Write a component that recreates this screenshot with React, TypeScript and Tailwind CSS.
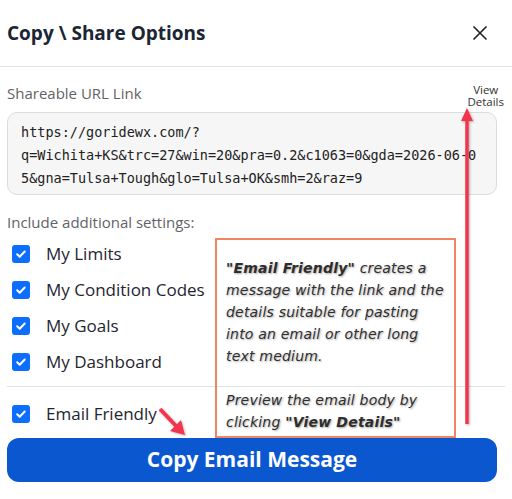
import React from "react";

const settings = ["My Limits", "My Condition Codes", "My Goals", "My Dashboard"];

function Check() {
  return (
    <span className="flex h-[18px] w-[18px] shrink-0 items-center justify-center rounded-[3px] bg-[#0d6efd]">
      <svg width="12" height="12" viewBox="0 0 12 12" fill="none">
        <path d="M2.2 6.2l2.5 2.5 5-5.2" stroke="white" strokeWidth="2" strokeLinecap="round" strokeLinejoin="round" />
      </svg>
    </span>
  );
}

function Row({ label }: { label: string }) {
  return (
    <label className="flex h-[36px] items-center gap-[16px] pl-[5px]">
      <Check />
      <span className="text-[17px] text-[#1e2530]">{label}</span>
    </label>
  );
}

export default function App() {
  return (
    <div className="relative h-[499px] w-[512px] overflow-hidden bg-white font-['Open_Sans',sans-serif]">
      <div className="flex h-[67px] items-center justify-between border-b border-[#e3e3e3] px-[7px]">
        <h1 className="text-[19px] font-bold text-[#1b2533]">Copy \ Share Options</h1>
        <svg width="16" height="16" viewBox="0 0 16 16" className="mr-[17px]">
          <path d="M1.5 1.5l13 13M14.5 1.5l-13 13" stroke="#222" strokeWidth="1.6" />
        </svg>
      </div>

      <div className="px-[7px]">
        <div className="flex items-end justify-between pt-[15px]">
          <span className="text-[15px] text-[#5f6368]">Shareable URL Link</span>
          <span className="-mb-[3px] -mt-[4px] mr-[1px] text-center text-[11.5px] leading-[12px] text-[#333]">
            View
            <br />
            Details
          </span>
        </div>
        <div className="mt-[7px] h-[83px] w-[490px] rounded-[10px] border border-[#dcdcdc] bg-[#f6f6f6] px-[13px] pt-[8px] font-['DejaVu_Sans_Mono',monospace] text-[13.5px] leading-[23px] text-[#222]">
          <div>https://goridewx.com/?</div>
          <div>q=Wichita+KS&amp;trc=27&amp;win=20&amp;pra=0.2&amp;c1063=0&amp;gda=2026-06-0</div>
          <div>5&amp;gna=Tulsa+Tough&amp;glo=Tulsa+OK&amp;smh=2&amp;raz=9</div>
        </div>

        <div className="pt-[16px] text-[15px] text-[#5f6368]">Include additional settings:</div>
        <div className="flex flex-col pt-[3px]">
          {settings.map((s) => (
            <Row key={s} label={s} />
          ))}
        </div>
        <div className="mt-[6px] border-t border-[#e3e3e3]" />
        <div className="pt-[9px]">
          <Row label="Email Friendly" />
        </div>
        <button className="mt-[6px] flex h-[44px] w-[490px] items-center justify-center rounded-[12px] bg-[#0b57cf] text-[21px] font-bold text-white">
          Copy Email Message
        </button>
      </div>

      {/* annotation overlay */}
      <div className="absolute left-[215px] top-[238px] h-[200px] w-[241px] whitespace-nowrap border-2 border-[#f38462] px-[9px] pt-[17px] font-['DejaVu_Sans',sans-serif] text-[14px] italic leading-[22px] tracking-[0.2px] text-[#2e2e2e] [text-shadow:1px_1px_2px_rgba(0,0,0,0.35)]">
        <p>
          <b>"Email Friendly"</b> creates a
          <br />
          message with the link and the
          <br />
          details suitable for pasting
          <br />
          into an email or other long
          <br />
          text medium.
        </p>
        <p className="mt-[22px]">
          Preview the email body by
          <br />
          clicking <b>"View Details"</b>
        </p>
      </div>

      <svg className="pointer-events-none absolute left-0 top-0" width="512" height="499">
        <defs>
          <filter id="sh" x="-50%" y="-50%" width="200%" height="200%">
            <feDropShadow dx="1" dy="1" stdDeviation="1" floodOpacity="0.3" />
          </filter>
        </defs>
        <g filter="url(#sh)" fill="#f2344e" stroke="#f2344e">
          <line x1="467" y1="120" x2="467" y2="424" strokeWidth="3.5" />
          <path d="M467 108 L473 121 L461 121 Z" stroke="none" />
          <line x1="160" y1="409" x2="177" y2="427" strokeWidth="4" />
          <path d="M185 435 L170 431 L181 420 Z" stroke="none" />
        </g>
      </svg>
    </div>
  );
}
